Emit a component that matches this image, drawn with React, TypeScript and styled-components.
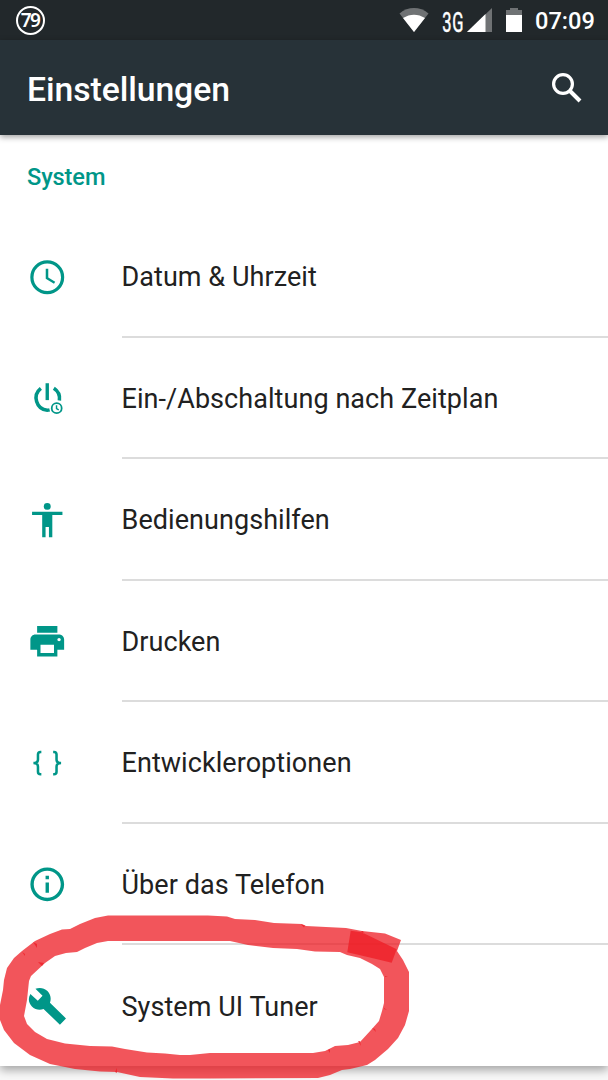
import React from "react";
import styled, { createGlobalStyle } from "styled-components";

const Global = createGlobalStyle`
  *, *::before, *::after { box-sizing: border-box; }
  body { margin: 0; background: #f8f8f8; font-family: Roboto, sans-serif; }
`;

const Screen = styled.div`
  position: relative;
  width: 608px;
  height: 1080px;
  overflow: hidden;
  background: #f8f8f8;
  display: flex;
  flex-direction: column;
`;

const StatusBar = styled.header`
  height: 40px;
  flex: none;
  display: flex;
  align-items: center;
  justify-content: space-between;
  padding: 0 14px 0 16px;
  background: #22282b;
  color: #fff;
`;

const Badge = styled.span`
  width: 29px;
  height: 29px;
  border: 2px solid #fff;
  border-radius: 50%;
  display: flex;
  align-items: center;
  justify-content: center;
  font: 600 19px/1 "Noto Sans", sans-serif;
  letter-spacing: -1.5px;
  padding-right: 1px;
`;

const StatusIcons = styled.div`
  display: flex;
  align-items: center;
`;

const Clock = styled.time`
  width: 59px;
  margin-left: 12px;
  padding-top: 1px;
  font-size: 23.6px;
  font-weight: 500;
  line-height: 38px;
  white-space: nowrap;
`;

const Toolbar = styled.div`
  position: relative;
  z-index: 1;
  height: 95px;
  flex: none;
  display: flex;
  align-items: center;
  justify-content: space-between;
  padding: 0 26px 0 27px;
  background: #273238;
  color: #fff;
  box-shadow: 0 2px 6px rgba(0, 0, 0, 0.38);
`;

const Title = styled.h1`
  margin: 4px 0 0;
  font-size: 33.75px;
  font-weight: 500;
  line-height: 40px;
  letter-spacing: -0.08px;
`;

const Card = styled.main`
  height: 931px;
  flex: none;
  background: #fff;
  box-shadow: 0 4px 9px rgba(0, 0, 0, 0.34);
`;

const SectionTitle = styled.h2`
  margin: 0;
  height: 81px;
  padding: 28px 0 0 27px;
  color: #009688;
  font-size: 23.6px;
  font-weight: 500;
  line-height: 28px;
  letter-spacing: -0.12px;
`;

const List = styled.ul`
  margin: 0;
  padding: 0;
  list-style: none;
`;

const Row = styled.li`
  height: 121.5px;
  display: flex;
  color: #009688;
`;

const IconSlot = styled.div`
  width: 121.5px;
  padding-left: 27px;
  display: flex;
  align-items: center;
  flex: none;

  svg { display: block; overflow: visible; }
`;

const Label = styled.div<{ $last?: boolean }>`
  flex: 1;
  display: flex;
  align-items: center;
  padding-top: ${(p) => (p.$last ? "2px" : "3px")};
  border-bottom: ${(p) => (p.$last ? "none" : "2px solid #dcdcdc")};
  color: #212121;
  font-size: 27px;
  line-height: 32px;
  letter-spacing: 0.06px;
`;

const Marker = styled.svg`
  position: absolute;
  left: 0;
  top: 0;
  z-index: 2;
  pointer-events: none;
`;

const Glyph = ({ children, size = 40.5 }: { children: React.ReactNode; size?: number }) => (
  <svg width={size} height={size} viewBox="0 0 24 24" fill="currentColor">{children}</svg>
);

const ClockIcon = () => (
  <Glyph>
    <circle cx="12" cy="12" r="9.1" fill="none" stroke="currentColor" strokeWidth="1.9" />
    <path d="M11.1 7h1.5v5.2l4.1 2.4-.7 1.2-4.9-2.9z" />
  </Glyph>
);

const PowerClockIcon = () => (
  <Glyph>
    <path d="M11 3.1h2v10h-2z" />
    <path d="M8.2 6.100A7.300 7.300 0 0 0 12 19.100c.5 0 1-.1 1.400-.2M15.900 6.100a7.300 7.300 0 0 1 3.300 7.200" fill="none" stroke="currentColor" strokeWidth="2.100" />
    <circle cx="17.6" cy="17.9" r="2.95" fill="none" stroke="currentColor" strokeWidth="1.05" />
    <path d="M17.5 16.2v1.9l1.3.8" fill="none" stroke="currentColor" strokeWidth=".85" />
  </Glyph>
);

const AccessibilityIcon = () => (
  <Glyph>
    <circle cx="12" cy="3.8" r="2.05" />
    <path d="M21 8.9h-6V22h-2v-6h-2v6H9V8.9H3v-2h18z" />
  </Glyph>
);

const PrintIcon = () => (
  <Glyph>
    <path d="M19 8H5c-1.66 0-3 1.34-3 3v6h4v4h12v-4h4v-6c0-1.66-1.34-3-3-3zm-3 11H8v-5h8v5zm3-7c-.55 0-1-.45-1-1s.45-1 1-1 1 .45 1 1-.45 1-1 1zm-1-9H6v4h12V3z" />
  </Glyph>
);

const BracesIcon = () => (
  <Glyph>
    <g fill="none" stroke="currentColor" strokeWidth="1.5">
      <path d="M8.5 5.3H8c-1 0-1.5.6-1.5 1.5v3c0 1.400-.9 2.100-2.700 2.100 1.800 0 2.700.7 2.700 2.100v3c0 .9.5 1.500 1.500 1.500h.5" />
      <path d="M15.500 5.300h.5c1 0 1.500.6 1.500 1.500v3c0 1.400.9 2.100 2.700 2.100-1.800 0-2.700.7-2.700 2.100v3c0 .9-.5 1.500-1.500 1.500h-.5" />
    </g>
  </Glyph>
);

const InfoIcon = () => (
  <Glyph>
    <path d="M11 17h2v-6h-2v6zm1-15C6.48 2 2 6.48 2 12s4.48 10 10 10 10-4.48 10-10S17.52 2 12 2zm0 18c-4.41 0-8-3.59-8-8s3.59-8 8-8 8 3.59 8 8-3.59 8-8 8zM11 9h2V7h-2v2z" />
  </Glyph>
);

const WrenchIcon = () => (
  <Glyph>
    <path d="M23.100 19.200l-9.500-9.300c.9-2.300.4-5-1.500-6.900-2-2-4.900-2.300-7.100-1.300L9.200 5.800 6.400 8.800 2 4.700C.5 7.300.9 10.100 2.900 12.100c1.900 1.900 4.600 2.400 6.900 1.500l9.700 9.300z" />
  </Glyph>
);

const StatusGlyphs = () => (
  <svg width="124" height="40" viewBox="400 0 124 40">
    <path d="M400.500 13.500C409 6.200 421 6.200 429.500 13.500L415 32Z" fill="#6f7274" />
    <path d="M404 18C411 13.500 419 13.500 426 18L415 32Z" fill="#fff" />
    <text transform="translate(443.200 32) scale(.6 1)" fontFamily="Roboto, sans-serif" fontSize="27.500" fontWeight="400" letterSpacing="1.500" stroke="#fff" strokeWidth=".5" fill="#fff">3G</text>
    <path d="M493 8V32H468Z" fill="#6f7274" />
    <path d="M486.500 14V32H468Z" fill="#fff" />
    <path d="M511 8h8v2h4v5h-16v-5h4z" fill="#6f7274" />
    <path d="M507 15h16v17h-16z" fill="#fff" />
  </svg>
);

const SearchIcon = () => (
  <svg width="30" height="30" viewBox="0 0 30 30" fill="none" stroke="#fff">
    <circle cx="11" cy="11" r="9.400" strokeWidth="3.200" />
    <path d="M17.500 17.500L28 28" strokeWidth="4" />
  </svg>
);

const SearchButton = styled.button`
  margin: 0;
  padding: 0;
  border: 0;
  background: none;
  display: flex;
`;

const items = [
  { label: "Datum & Uhrzeit", Icon: ClockIcon },
  { label: "Ein-/Abschaltung nach Zeitplan", Icon: PowerClockIcon },
  { label: "Bedienungshilfen", Icon: AccessibilityIcon },
  { label: "Drucken", Icon: PrintIcon },
  { label: "Entwickleroptionen", Icon: BracesIcon },
  { label: "Über das Telefon", Icon: InfoIcon },
  { label: "System UI Tuner", Icon: WrenchIcon },
];

export default function App() {
  return (
    <Screen>
      <Global />
      <StatusBar>
        <Badge>79</Badge>
        <StatusIcons>
          <StatusGlyphs />
          <Clock>07:09</Clock>
        </StatusIcons>
      </StatusBar>
      <Toolbar>
        <Title>Einstellungen</Title>
        <SearchButton aria-label="Suchen"><SearchIcon /></SearchButton>
      </Toolbar>
      <Card>
        <SectionTitle>System</SectionTitle>
        <List>
          {items.map(({ label, Icon }, i) => (
            <Row key={label}>
              <IconSlot><Icon /></IconSlot>
              <Label $last={i === items.length - 1}>{label}</Label>
            </Row>
          ))}
        </List>
      </Card>
      <Marker width="608" height="1080" viewBox="0 0 608 1080" fill="#ed1c24">
        <path
          fillOpacity=".75"
          fillRule="evenodd"
          d="M108 915.500H208L227 916.500 235 919 255 920 274 923 302 924 306 926 346 928 362 931 385 933.500 401 940 397 951 403 960 409 972V1011L405 1025 398 1038 388 1049 375 1060 367 1065 350 1069 342 1070 330 1075 318 1078L210 1078.500H173L140 1077 117 1072 100 1071.500 75 1069 50 1064 30 1055 14 1043 4 1030 0 1020V1005L3 990 4 980 7 968 14 958 22 951 35 941 50 934 62 929.500 70 929 80 924 95 918Z
          M108 941H230L248 945 273 948 297 949 315 951.500 340 952 347 955 360 958 372 964 380 969 384 977V1003L382 1011 379 1021 371 1030 360 1042 348 1045 335 1046 325 1051 313 1053H210L190 1055 180 1055 165 1053.500 147 1052.500 125 1049 112 1046.500 90 1046 65 1043.500 47 1039 35 1032 27 1024 24 1016 27 1000 29 981 31 976 45 963 55 956 66 953 77 952 85 948 97 943Z"
        />
        <path fillOpacity=".75" d="M350.700 930.700L361.700 932.300 396.700 949.300 391.700 962.700 373 958.300 347.300 952.300ZM33 942l4 2v4zM38 962l6 1-2 3zM22 952l3 2v2zM115 1072l2-4v5zM372 1028l4 4-1-3zM358 1041l3 5-1-5zM328 1050l2-1v4zM385 976h3l-3 1zM384 1008l3 2-3-1zM301 924.500l3 3 1-2zM361 931l3 3-1-3z" />
      </Marker>
    </Screen>
  );
}
